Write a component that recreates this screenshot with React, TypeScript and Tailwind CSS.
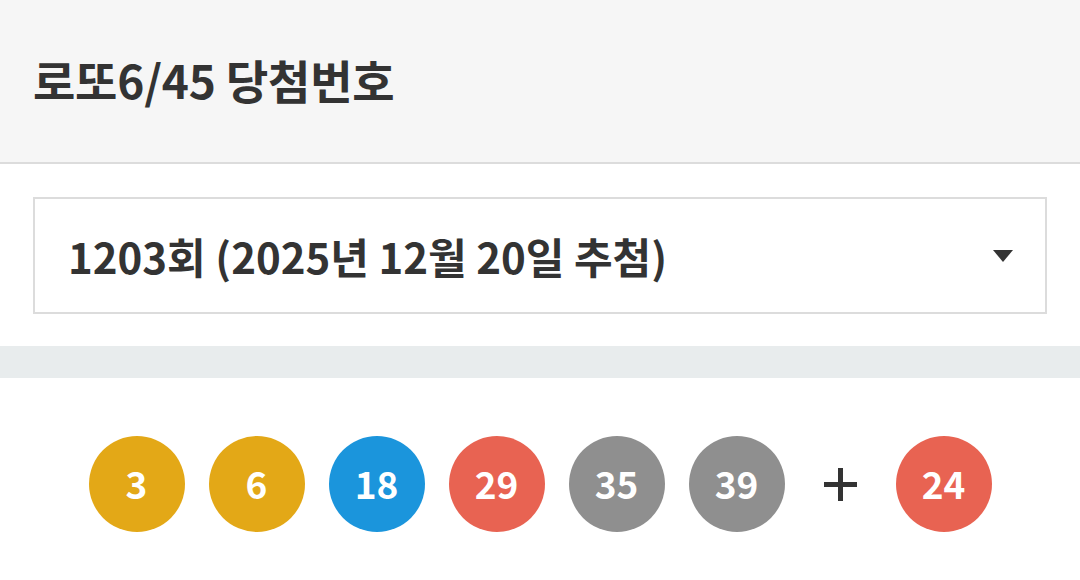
const balls = [
  { n: 3, color: "bg-[#e3a817]" },
  { n: 6, color: "bg-[#e3a817]" },
  { n: 18, color: "bg-[#1b95dc]" },
  { n: 29, color: "bg-[#e86352]" },
  { n: 35, color: "bg-[#8f8f8f]" },
  { n: 39, color: "bg-[#8f8f8f]" },
];

function Ball({ n, color }: { n: number; color: string }) {
  return (
    <div
      className={`w-[96px] h-[96px] rounded-full ${color} flex items-center justify-center text-white text-[37px] font-bold`}
    >
      {n}
    </div>
  );
}

export default function App() {
  return (
    <div
      className="w-[1080px] h-[580px] bg-white text-[#333]"
      style={{ fontFamily: '"Noto Sans CJK KR", "Noto Sans", sans-serif' }}
    >
      <header className="h-[164px] bg-[#f6f6f6] border-b-2 border-[#dcdcdc] flex items-center px-[33px]">
        <h1 className="text-[46px] font-bold tracking-[-0.2px] leading-none pb-[4px]">로또6/45 당첨번호</h1>
      </header>

      <div className="px-[33px] pt-[33px] pb-[32px]">
        <div className="h-[117px] border-2 border-[#dcdcdc] flex items-center justify-between pl-[33px] pr-[32px]">
          <span className="text-[42px] font-bold leading-none">1203회 (2025년 12월 20일 추첨)</span>
          <svg width="20" height="12" viewBox="0 0 20 12">
            <path d="M0 0 H20 L10 12 Z" fill="#333" />
          </svg>
        </div>
      </div>

      <div className="h-[32px] bg-[#e8eced]" />

      <div className="flex items-center justify-center gap-[24px] pt-[58px]">
        {balls.map((b) => (
          <Ball key={b.n} n={b.n} color={b.color} />
        ))}
        <div className="w-[63px] flex items-center justify-center">
          <svg width="33" height="33" viewBox="0 0 33 33">
            <path d="M16.5 0 V33 M0 16.5 H33" stroke="#333" strokeWidth="5" />
          </svg>
        </div>
        <Ball n={24} color="bg-[#e86352]" />
      </div>
    </div>
  );
}
